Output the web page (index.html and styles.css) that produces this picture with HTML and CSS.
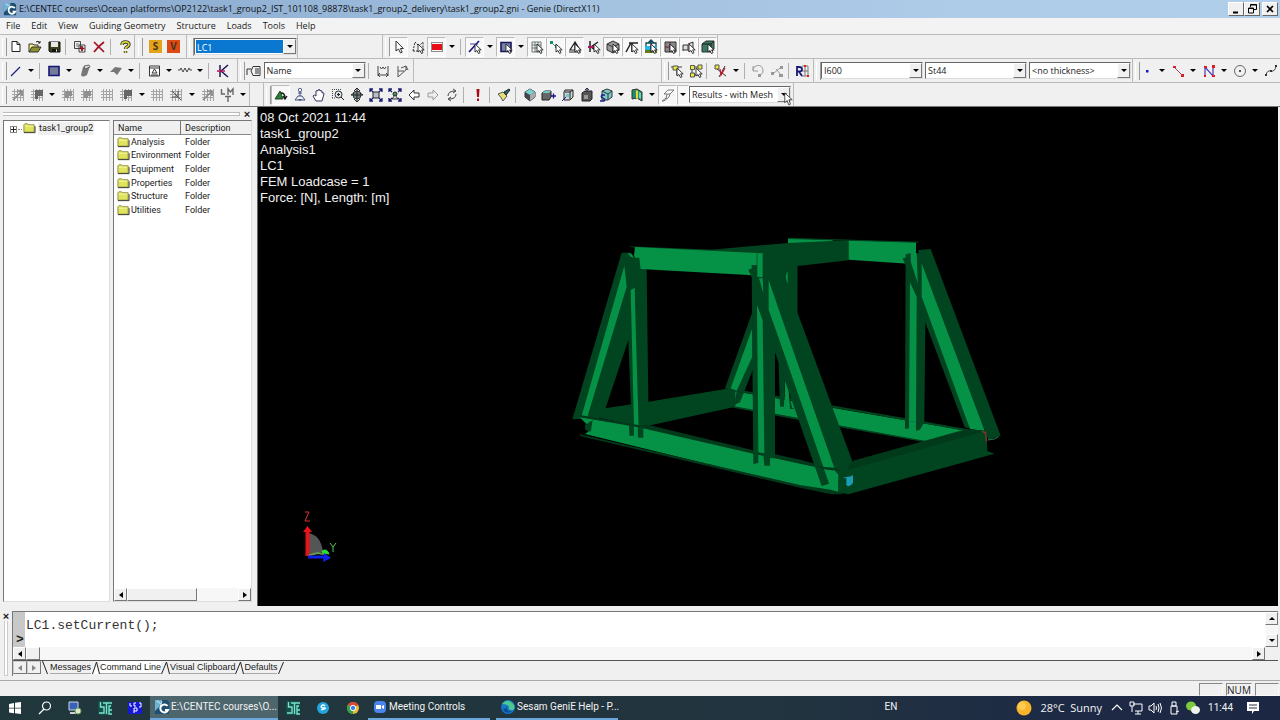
FILE: index.html
```html
<!DOCTYPE html>
<html lang="en">
<head>
<meta charset="utf-8">
<title>task1_group2.gni - Genie (DirectX11)</title>
<link rel="stylesheet" href="styles.css">
</head>
<body>
<svg class="defs" aria-hidden="true">
  <symbol id="genie" viewBox="0 0 16 16"><path d="M1 1h12l2 2v12H1z" fill="#1d4f73"/><path d="M1 1h7L5 8l-4 4z" fill="#6fb3d2"/><path d="M3 2l4 3M8 2l-2 6" stroke="#cfeaf5"/><path d="M13.500 7A4 4 0 1 0 14 11h-3" fill="none" stroke="#fff" stroke-width="2"/></symbol>
  <symbol id="ptr" viewBox="0 0 16 16"><path d="M5 2v10l2.500-2 2 4 1.700-.8L9.400 9.500h3z" fill="#fff" stroke="#333"/></symbol>
  <symbol id="sub" viewBox="0 0 16 16"><path d="M8 5v8l2-1.500 1.500 3 1.500-.8-1.400-2.800h2.600z" fill="#fff" stroke="#222" stroke-width=".9"/></symbol>
  <symbol id="new" viewBox="0 0 16 16"><path d="M4 2.500h5l3 3v7H4z" fill="#fff" stroke="#222"/><path d="M9 2.500v3h3" fill="none" stroke="#222"/></symbol>
  <symbol id="open" viewBox="0 0 16 16"><path d="M2 13V5h4l1 1h4v2" fill="#f0ee80" stroke="#333"/><path d="M2 13l3-5h9l-3 5z" fill="#8c9030" stroke="#333"/><path d="M9 3q2-2 4 1M13 2v2h-2" fill="none" stroke="#222"/></symbol>
  <symbol id="save" viewBox="0 0 16 16"><path d="M3 3h11v10H4l-1-1z" fill="#3d3f16" stroke="#111"/><path d="M5 3h7v5H5z" fill="#e8e8e8"/><path d="M6 10h6v3H6z" fill="#111"/><path d="M10 10.500h1v2h-1z" fill="#fff"/></symbol>
  <symbol id="copy" viewBox="0 0 16 16"><path d="M2.500 2.500h6v7h-6zM7 6h6v7H7z" fill="#eee" stroke="#444"/><path d="M4 5h3M4 7h3" stroke="#777"/><path d="M10 7v5M7.500 9.500h5" stroke="#901020" stroke-width="1.700"/></symbol>
  <symbol id="del" viewBox="0 0 16 16"><path d="M3 3l10 10M13 3C9 6 6 9 3 13" fill="none" stroke="#a41324" stroke-width="1.700"/></symbol>
  <symbol id="help" viewBox="0 0 16 16"><path d="M5 6c0-4 7-4 7-.5C12 8 8.500 7.500 8.500 10M8.500 12v2" fill="none" stroke="#333" stroke-width="3.400"/><path d="M5 6c0-4 7-4 7-.5C12 8 8.500 7.500 8.500 10M8.500 12v2" fill="none" stroke="#d6d832" stroke-width="1.700"/></symbol>
  <symbol id="line" viewBox="0 0 16 16"><path d="M3 13L12 4" stroke="#20208a" stroke-width="1.300"/></symbol>
  <symbol id="rect" viewBox="0 0 16 16"><path d="M3 3.500h10v9H3z" fill="#737b99" stroke="#151575" stroke-width="1.600"/></symbol>
  <symbol id="cyl" viewBox="0 0 16 16"><path d="M6 4l7-1-3 9q-5 3-6 0z" fill="#777"/><path d="M7 3l5-1 1 2-5 2z" fill="#ddd" stroke="#666"/></symbol>
  <symbol id="plate" viewBox="0 0 16 16"><path d="M2 9l5-5 7 1-5 7-3-3z" fill="#777"/></symbol>
  <symbol id="support" viewBox="0 0 16 16"><path d="M3.500 3h10v10h-10z" fill="#fff" stroke="#333"/><path d="M4 5h9M8.500 6L6 10h5zM5 12h7" fill="none" stroke="#333"/></symbol>
  <symbol id="spring" viewBox="0 0 16 16"><path d="M1 7h2l1-2 2 4 2-4 2 4 2-4 1 2h2" fill="none" stroke="#444"/></symbol>
  <symbol id="joint" viewBox="0 0 16 16"><path d="M5 2v12M13 2L6 8l7 6" fill="none" stroke="#251452" stroke-width="1.500"/><path d="M2 8h8" stroke="#c01460" stroke-width="1.500"/></symbol>
  <symbol id="label" viewBox="0 0 16 16"><path d="M7 3.500h7v9H7L5 8zM9 6h4M9 8h4M9 10h4" fill="none" stroke="#333"/><path d="M1 12V6h4" fill="none" stroke="#333"/></symbol>
  <symbol id="dim" viewBox="0 0 16 16"><path d="M3 3v10M13 3v10M3 12h10M5 10l-2 2 2 2M11 10l2 2-2 2M5 4l1.500 2L8 4l1.500 2L11 4" fill="none" stroke="#444"/></symbol>
  <symbol id="ang" viewBox="0 0 16 16"><path d="M3 3v11l9-8M3 8h6M11 3v4M6 5l5-2 2 4" fill="none" stroke="#555"/></symbol>
  <symbol id="poly" viewBox="0 0 16 16"><path d="M3 12L5 3l4 4 4-4v9M3 12h5" fill="none" stroke="#333" stroke-dasharray="2 1"/><use href="#sub"/></symbol>
  <symbol id="redsel" viewBox="0 0 16 16"><path d="M2.500 3.500h11v9h-11z" fill="none" stroke="#222" stroke-dasharray="1 1"/><path d="M3 5h10v6H3z" fill="#e80d16"/></symbol>
  <symbol id="linesel" viewBox="0 0 16 16"><path d="M2 13L12 2" stroke="#181880" stroke-width="1.700"/><path d="M3 5h8" stroke="#44a"/><use href="#sub"/></symbol>
  <symbol id="rectsel" viewBox="0 0 16 16"><path d="M3 3.500h10v9H3z" fill="#7982a3" stroke="#151560" stroke-width="1.600"/><use href="#sub"/></symbol>
  <symbol id="gridsel" viewBox="0 0 16 16"><path d="M3 3h9v10H3zM3 6h9M3 9h9M6 3v10M9 3v10" fill="none" stroke="#69756e"/><use href="#sub"/></symbol>
  <symbol id="nodesel" viewBox="0 0 16 16"><path d="M3 3l10 10" stroke="#777"/><path d="M2 2h3v3H2zM7 6h3v3H7z" fill="#12906e"/><use href="#sub"/></symbol>
  <symbol id="supsel" viewBox="0 0 16 16"><path d="M8 3L3 11h10zM2 13h12M8 3v8" fill="none" stroke="#222" stroke-width="1.200"/><use href="#sub"/></symbol>
  <symbol id="ksel" viewBox="0 0 16 16"><path d="M4 2v11M12 3L5 8l7 5" fill="none" stroke="#222" stroke-width="1.500"/><path d="M2 8h6" stroke="#b01360" stroke-width="2"/><use href="#sub"/></symbol>
  <symbol id="cubesel" viewBox="0 0 16 16"><path d="M2 5l6-3 6 3v6l-6 3-6-3z" fill="#999" stroke="#333"/><path d="M2 5l6 3 6-3M8 8v6" fill="none" stroke="#333"/><use href="#sub"/></symbol>
  <symbol id="legsel" viewBox="0 0 16 16"><path d="M2 13L7 4h6M5 4h9M8 4v9" fill="none" stroke="#222" stroke-width="1.500"/><use href="#sub"/></symbol>
  <symbol id="env" viewBox="0 0 16 16"><path d="M2 7h12v4H2z" fill="#26b6e5"/><path d="M2 11h12v3H2z" fill="#67781c"/><path d="M3 7V4h10v3M8 1v12M5 4l3-3 3 3" fill="none" stroke="#134858" stroke-width="1.300"/><use href="#sub"/></symbol>
  <symbol id="compsel" viewBox="0 0 16 16"><path d="M3 3h11v10H3z" fill="#888" stroke="#333"/><path d="M3 8h9M8 3v10" stroke="#602035"/><use href="#sub"/></symbol>
  <symbol id="equip" viewBox="0 0 16 16"><path d="M2 12V6h5v5H2M7 5l5-2v7l-5 2" fill="#ddd" stroke="#333"/><use href="#sub"/></symbol>
  <symbol id="msel" viewBox="0 0 16 16"><path d="M2 5l4-3h8v8l-3 3H2z" fill="#377b60" stroke="#333"/><path d="M2 5h9v8M11 5l3-3" fill="none" stroke="#222"/><use href="#sub"/></symbol>
  <symbol id="y1" viewBox="0 0 16 16"><path d="M2 4h11M8 4v8" stroke="#444" fill="none"/><path d="M4 3h5v4H4z" fill="#f0eb35" stroke="#555"/><use href="#sub"/></symbol>
  <symbol id="y2" viewBox="0 0 16 16"><path d="M5 4h7M4 6v6h7" stroke="#333" fill="none"/><path d="M2.500 2.500h4v4h-4zM10 2h4v4h-4zM2.500 10h4v4h-4z" fill="#f0eb35" stroke="#555"/><use href="#sub"/></symbol>
  <symbol id="y3" viewBox="0 0 16 16"><path d="M6 14l6-11M4 6l9 7" stroke="#333"/><path d="M2 2h4v4H2z" fill="#eee736" stroke="#555"/><path d="M7 6l1 6 4-7" fill="none" stroke="#c71928" stroke-width="1.300"/></symbol>
  <symbol id="undo" viewBox="0 0 16 16"><path d="M3 7a5 5 0 1 1 7 5M3 3v5h5" fill="none" stroke="#999"/><path d="M8 11h3v3H8z" fill="#999"/></symbol>
  <symbol id="xg" viewBox="0 0 16 16"><path d="M2 9h3v3H2zM11 3h3v3h-3zM10 11h4v3h-4z" fill="#999"/><path d="M5 10l6-5M7 6l6 7" stroke="#999"/></symbol>
  <symbol id="rn" viewBox="0 0 16 16"><path d="M8 3h6v10H8M8 8h6M11 3v10" fill="none" stroke="#777"/><path d="M3 13V4h2q3 0 3 2.300T5 8.500H3m2 0l3 4.500" fill="none" stroke="#181875" stroke-width="1.800"/><path d="M10 2h2v2h-2zM13 12h2v2h-2z" fill="#e11b28"/></symbol>
  <symbol id="pt" viewBox="0 0 16 16"><path d="M7 7h2.500v2.500H7z" fill="#1818c0"/></symbol>
  <symbol id="gl" viewBox="0 0 16 16"><path d="M4 4l8 8" stroke="#a44262"/><path d="M3 3h3v2H3zM11 11h3v3h-3z" fill="#d82027"/></symbol>
  <symbol id="gn" viewBox="0 0 16 16"><path d="M4 13V4l8 9V3" fill="none" stroke="#4b3ab0" stroke-width="1.200"/><path d="M3 3h3v2H3zM11 2h3v3h-3zM3 12h2v2H3zM11 12h3v2h-3z" fill="#e01c29"/></symbol>
  <symbol id="gc" viewBox="0 0 16 16"><circle cx="8" cy="8" r="5.500" fill="none" stroke="#666"/><path d="M7 7h2v2H7z" fill="#555"/></symbol>
  <symbol id="gs" viewBox="0 0 16 16"><path d="M3 12q1-5 5-4t5-5" fill="none" stroke="#444"/><path d="M2 11h2v2H2zM7 7h2v2H7zM12 2h2v2h-2z" fill="#333"/></symbol>
  <symbol id="mesh" viewBox="0 0 16 16"><path d="M2 4.500h12M2 7.500h12M2 10.500h12M4.500 2v12M7.500 2v12M10.500 2v12M13.500 2v12" stroke="#a4a4a4"/></symbol>
  <symbol id="mesh1" viewBox="0 0 16 16"><use href="#mesh"/><path d="M3 13L12 4M7 4h5v5" fill="none" stroke="#888" stroke-width="1.700"/></symbol>
  <symbol id="mesh2" viewBox="0 0 16 16"><use href="#mesh"/><path d="M5 4h7v5H9v2H5z" fill="#909090"/></symbol>
  <symbol id="meshd" viewBox="0 0 16 16"><use href="#mesh"/><path d="M6 3h8v6H9v3H6z" fill="#666"/></symbol>
  <symbol id="mesh3" viewBox="0 0 16 16"><use href="#mesh"/><path d="M4 4l9 9M4 10h6V4" fill="none" stroke="#555"/></symbol>
  <symbol id="lmt" viewBox="0 0 16 16"><path d="M2.500 2v5H6M9 8V2l2.500 3L14 2v6M6 9.500h6M9 10v5" fill="none" stroke="#666" stroke-width="1.400"/></symbol>
  <symbol id="rot" viewBox="0 0 16 16"><path d="M2 12l5-8 3 8z" fill="#2b7d34" stroke="#24472b"/><path d="M8 6q4 0 4 5M10 9l2 3 2-3" fill="none" stroke="#111" stroke-width="1.300"/></symbol>
  <symbol id="pan3" viewBox="0 0 16 16"><path d="M8 4v5M6 6h4M6 9l-3 4h10l-3-4z" fill="none" stroke="#415080"/><path d="M8 14l-2-2h4z" fill="#415080"/><circle cx="8" cy="3" r="1.700" fill="#fff" stroke="#52629a"/></symbol>
  <symbol id="hand" viewBox="0 0 16 16"><path d="M5 14L2 9q1-2 3 0V4q1-1 2 0V3q1-1 2 0v1q1-1 2 0v2q2-1 2 1l-2 7z" fill="#fff" stroke="#343466"/></symbol>
  <symbol id="zoomr" viewBox="0 0 16 16"><path d="M2 2.500h9M2.500 2v9M2 11h4" stroke="#444" fill="none" stroke-dasharray="1 1"/><circle cx="8.500" cy="7.500" r="3.500" fill="#dde5ea" stroke="#333"/><path d="M11 10l3 3M7 7.500h3M8.500 6v3" stroke="#222"/></symbol>
  <symbol id="orbit" viewBox="0 0 16 16"><circle cx="8" cy="8" r="4" fill="#71868a" stroke="#333"/><path d="M8 1v14M5 4l3-3 3 3M5 12l3 3 3-3M2 8h12M2 8l3-2M14 8l-3-2" stroke="#222" fill="none"/></symbol>
  <symbol id="fit" viewBox="0 0 16 16"><path d="M5 5h6v6H5z" fill="#bbc" stroke="#222"/><path d="M2 5V2h3M11 2h3v3M14 11v3h-3M5 14H2v-3M2 2l3 3M14 2l-3 3M2 14l3-3M14 14l-3-3" fill="none" stroke="#181b70" stroke-width="1.300"/></symbol>
  <symbol id="fits" viewBox="0 0 16 16"><circle cx="8" cy="7" r="2" fill="#44966a" stroke="#222"/><path d="M5 12l3-4 3 4z" fill="#ddd" stroke="#333"/><path d="M2 5V2h3M11 2h3v3M14 11v3h-3M5 14H2v-3M2 2l3 3M14 2l-3 3M2 14l3-3M14 14l-3-3" fill="none" stroke="#181b70" stroke-width="1.300"/></symbol>
  <symbol id="left" viewBox="0 0 16 16"><path d="M8 3L3 8l5 5v-3h5V6H8z" fill="#fff" stroke="#333"/></symbol>
  <symbol id="right" viewBox="0 0 16 16"><path d="M8 3l5 5-5 5v-3H3V6h5z" fill="#eee" stroke="#999"/></symbol>
  <symbol id="refresh" viewBox="0 0 16 16"><path d="M4 9q0-5 7-5M12 7q0 5-7 5M9 2l3 2-3 2M7 10l-3 2 3 2" fill="none" stroke="#444"/></symbol>
  <symbol id="bang" viewBox="0 0 16 16"><path d="M6.500 2h3L9 10H7zM7 11.500h2V14H7z" fill="#a50d1c"/></symbol>
  <symbol id="brush" viewBox="0 0 16 16"><path d="M2 7l5-2 4 4-4 5q-2-4-5-7z" fill="#e6df78" stroke="#555"/><path d="M8 5l5-3 1 1-4 5z" fill="#24706c" stroke="#222"/></symbol>
  <symbol id="cube" viewBox="0 0 16 16"><path d="M3 5l5-3 5 3v5l-5 4-5-4z" fill="#445" stroke="#333"/><path d="M3 5l5-3 5 3-5 3z" fill="#77d4d0"/><path d="M8 8l5-3v5l-5 4z" fill="#aaa"/></symbol>
  <symbol id="cube2" viewBox="0 0 16 16"><path d="M1 6l3-2h6v6l-2 3H1z" fill="#666" stroke="#222"/><path d="M1 6l3-2h6L8 6z" fill="#70cac8"/><path d="M10 9h5M12.500 6.500v5" stroke="#1a1a88" stroke-width="1.400"/></symbol>
  <symbol id="cube3" viewBox="0 0 16 16"><path d="M5 3h8v7l-3 3H4V5zM5 5h5v7M10 5l3-2" fill="#ccd5d7" stroke="#222"/><path d="M6 7h3v3H6z" fill="#70cac8"/><path d="M2 14l4-4" stroke="#1a1a88"/></symbol>
  <symbol id="cube4" viewBox="0 0 16 16"><path d="M3 6l3-2h7v8l-2 2H3z" fill="#555" stroke="#222"/><path d="M5 8h4v4H5z" fill="#999"/><path d="M8 1v4M6 3l2-2 2 2" stroke="#224" fill="none"/></symbol>
  <symbol id="cube5" viewBox="0 0 16 16"><path d="M4 4l5-2 5 2v6l-4 3H4z" fill="#7accc8" stroke="#333"/><path d="M4 4l6 3 4-3M10 7v6" fill="none" stroke="#333"/><path d="M7 8H4q-2 2 1 3t1 3H2" fill="none" stroke="#1a1a88" stroke-width="1.300"/></symbol>
  <symbol id="door" viewBox="0 0 16 16"><path d="M3 3l5-1 5 3v9l-5-3-5 1z" fill="#248d65" stroke="#333"/><path d="M7 3l2 1v8l-2-1z" fill="#e5db35"/><path d="M10 5l2 1v6l-2-1z" fill="#72cbcf"/></symbol>
  <symbol id="beam" viewBox="0 0 16 16"><path d="M4 7l4-4h6l-4 4zM7 7l-1 5M10 7l-1 3-5 4H2l4-3" fill="#fff" stroke="#777"/></symbol>
  <symbol id="folder" viewBox="0 0 14 12"><path d="M1 2.500l1-1h3l1 1h6v8H1z" fill="#dfe45c" stroke="#8c8c44"/><path d="M2 4h9" stroke="#f8f8b0"/><path d="M1 11h12V4" fill="none" stroke="#333"/></symbol>
  <symbol id="sg" viewBox="0 0 16 16"><path d="M1 1h14v14H1z" fill="#14504b"/><path d="M3.500 2v5H7v6H2M6 3h9M9.500 3v11M14 6h-2v8h3M12 10h3" fill="none" stroke="#7be0c8" stroke-width="1.400"/></symbol>
</svg>

<header class="titlebar">
  <svg class="ic"><use href="#genie"/></svg>
  <h1>E:\CENTEC courses\Ocean platforms\OP2122\task1_group2_IST_101108_98878\task1_group2_delivery\task1_group2.gni - Genie (DirectX11)</h1>
  <div class="winbtns">
    <button aria-label="Minimize"><svg viewBox="0 0 14 12"><path d="M4 9.500h5" stroke="#000" stroke-width="2"/></svg></button>
    <button aria-label="Restore"><svg viewBox="0 0 14 12"><path d="M5.500 4V1.500h6v5H9M3.500 5h5v5h-5zM5 2h7M3 5.500h6" fill="none" stroke="#000"/></svg></button>
    <button class="close" aria-label="Close"><svg viewBox="0 0 14 12"><path d="M4 3l6 6M10 3L4 9" stroke="#000" stroke-width="1.700"/></svg></button>
  </div>
</header>
<nav class="menubar">
  <button>File</button><button>Edit</button><button>View</button><button>Guiding Geometry</button><button>Structure</button><button>Loads</button><button>Tools</button><button>Help</button>
</nav>

<div class="row">
  <div class="bar w-std">
    <button class="tb" aria-label="New"><svg><use href="#new"/></svg></button><button class="tb" aria-label="Open"><svg><use href="#open"/></svg></button><button class="tb" aria-label="Save"><svg><use href="#save"/></svg></button><i class="sep"></i><button class="tb" aria-label="Copy"><svg><use href="#copy"/></svg></button><button class="tb" aria-label="Delete"><svg><use href="#del"/></svg></button><i class="sep"></i><button class="tb" aria-label="Help"><svg><use href="#help"/></svg></button>
  </div>
  <div class="bar w-sv">
    <button class="sq amber">S</button><button class="sq red">V</button>
  </div>
  <div class="bar w-lc">
    <div class="combo picked"><select aria-label="Load case"><option>LC1</option></select><span class="arrow"></span></div>
  </div>
  <div class="bar w-sel gap-sel">
    <button class="tb on" aria-label="Select"><svg><use href="#ptr"/></svg></button><button class="tb" aria-label="Polygon select"><svg><use href="#poly"/></svg></button><button class="tb on" aria-label="Box select"><svg><use href="#redsel"/></svg></button><button class="dd" aria-label="More"></button><i class="sep"></i><button class="tb on" aria-label="Beams"><svg><use href="#linesel"/></svg></button><button class="dd" aria-label="More"></button><button class="tb on" aria-label="Plates"><svg><use href="#rectsel"/></svg></button><button class="dd" aria-label="More"></button><button class="tb on" aria-label="Grid"><svg><use href="#gridsel"/></svg></button><button class="tb on" aria-label="Points"><svg><use href="#nodesel"/></svg></button><button class="tb on" aria-label="Supports"><svg><use href="#supsel"/></svg></button><button class="tb" aria-label="Joints"><svg><use href="#ksel"/></svg></button><button class="tb on" aria-label="Volumes"><svg><use href="#cubesel"/></svg></button><button class="tb on" aria-label="Legs"><svg><use href="#legsel"/></svg></button><button class="tb on" aria-label="Environment"><svg><use href="#env"/></svg></button><button class="tb on" aria-label="Compartments"><svg><use href="#compsel"/></svg></button><button class="tb on" aria-label="Equipment"><svg><use href="#equip"/></svg></button><button class="tb on" aria-label="Mesh"><svg><use href="#msel"/></svg></button>
  </div>
</div>

<div class="row">
  <div class="bar w-draw">
    <button class="tb" aria-label="Beam"><svg><use href="#line"/></svg></button><button class="dd" aria-label="More"></button><i class="sep"></i><button class="tb" aria-label="Plate"><svg><use href="#rect"/></svg></button><button class="dd" aria-label="More"></button><button class="tb" aria-label="Shell"><svg><use href="#cyl"/></svg></button><button class="dd" aria-label="More"></button><button class="tb" aria-label="Surface"><svg><use href="#plate"/></svg></button><button class="dd" aria-label="More"></button><i class="sep"></i><button class="tb" aria-label="Support"><svg><use href="#support"/></svg></button><button class="dd" aria-label="More"></button><button class="tb" aria-label="Spring"><svg><use href="#spring"/></svg></button><button class="dd" aria-label="More"></button><i class="sep"></i><button class="tb" aria-label="Joint"><svg><use href="#joint"/></svg></button>
  </div>
  <div class="bar w-name">
    <button class="tb" aria-label="Label"><svg><use href="#label"/></svg></button>
    <div class="combo"><select aria-label="Label by"><option>Name</option></select><span class="arrow"></span></div><i class="sep"></i><button class="tb" aria-label="Length"><svg><use href="#dim"/></svg></button><button class="tb" aria-label="Angle"><svg><use href="#ang"/></svg></button>
  </div>
  <div class="bar w-edit gap-edit">
    <button class="tb" aria-label="Move node"><svg><use href="#y1"/></svg></button><button class="tb" aria-label="Move nodes"><svg><use href="#y2"/></svg></button><i class="sep"></i><button class="tb" aria-label="Split"><svg><use href="#y3"/></svg></button><button class="dd" aria-label="More"></button><i class="sep"></i><button class="tb" aria-label="Undo"><svg><use href="#undo"/></svg></button><button class="tb" aria-label="Disconnect"><svg><use href="#xg"/></svg></button><i class="sep"></i><button class="tb" aria-label="Renumber"><svg><use href="#rn"/></svg></button>
  </div>
  <div class="bar w-prop">
    <div class="combo"><select aria-label="Section"><option>I600</option></select><span class="arrow"></span></div>
    <div class="combo"><select aria-label="Material"><option>St44</option></select><span class="arrow"></span></div>
    <div class="combo"><select aria-label="Thickness"><option>&lt;no thickness&gt;</option></select><span class="arrow"></span></div>
  </div>
  <div class="bar w-guide">
    <button class="tb" aria-label="Guide point"><svg><use href="#pt"/></svg></button><button class="dd" aria-label="More"></button><button class="tb" aria-label="Guide line"><svg><use href="#gl"/></svg></button><button class="dd" aria-label="More"></button><button class="tb" aria-label="Polyline"><svg><use href="#gn"/></svg></button><button class="dd" aria-label="More"></button><button class="tb" aria-label="Circle"><svg><use href="#gc"/></svg></button><button class="dd" aria-label="More"></button><button class="tb" aria-label="Spline"><svg><use href="#gs"/></svg></button>
  </div>
</div>

<div class="row">
  <div class="bar w-mesh">
    <button class="tb" aria-label="Mesh 1"><svg><use href="#mesh1"/></svg></button><button class="tb" aria-label="Mesh 2"><svg><use href="#meshd"/></svg></button><button class="dd" aria-label="More"></button><button class="tb" aria-label="Mesh 3"><svg><use href="#mesh2"/></svg></button><button class="tb" aria-label="Mesh 4"><svg><use href="#mesh2"/></svg></button><button class="tb" aria-label="Mesh 5"><svg><use href="#mesh"/></svg></button><button class="tb" aria-label="Mesh 6"><svg><use href="#meshd"/></svg></button><button class="dd" aria-label="More"></button><button class="tb" aria-label="Mesh 7"><svg><use href="#mesh"/></svg></button><button class="tb" aria-label="Mesh 8"><svg><use href="#mesh3"/></svg></button><button class="dd" aria-label="More"></button><button class="tb" aria-label="Mesh 9"><svg><use href="#mesh1"/></svg></button><button class="tb" aria-label="Locks"><svg><use href="#lmt"/></svg></button><button class="dd" aria-label="More"></button>
  </div>
  <div class="bar w-view gap-view">
    <button class="tb on" aria-label="Rotate"><svg><use href="#rot"/></svg></button><button class="tb" aria-label="Walk"><svg><use href="#pan3"/></svg></button><button class="tb" aria-label="Pan"><svg><use href="#hand"/></svg></button><button class="tb" aria-label="Zoom area"><svg><use href="#zoomr"/></svg></button><button class="tb" aria-label="Orbit"><svg><use href="#orbit"/></svg></button><button class="tb" aria-label="Fit all"><svg><use href="#fit"/></svg></button><button class="tb" aria-label="Fit selection"><svg><use href="#fits"/></svg></button><button class="tb" aria-label="Back"><svg><use href="#left"/></svg></button><button class="tb" aria-label="Forward"><svg><use href="#right"/></svg></button><button class="tb" aria-label="Refresh"><svg><use href="#refresh"/></svg></button><i class="sep"></i><button class="tb" aria-label="Alert"><svg><use href="#bang"/></svg></button><i class="sep"></i><button class="tb" aria-label="Paint"><svg><use href="#brush"/></svg></button><i class="sep"></i><button class="tb" aria-label="Isometric"><svg><use href="#cube"/></svg></button><button class="tb" aria-label="From X"><svg><use href="#cube2"/></svg></button><button class="tb" aria-label="From Y"><svg><use href="#cube3"/></svg></button><button class="tb" aria-label="From Z"><svg><use href="#cube4"/></svg></button><button class="tb" aria-label="Saved view"><svg><use href="#cube5"/></svg></button><button class="dd" aria-label="More"></button><button class="tb" aria-label="Clip"><svg><use href="#door"/></svg></button><button class="dd" aria-label="More"></button><button class="tb on" aria-label="Outline"><svg><use href="#beam"/></svg></button><button class="dd on" aria-label="More"></button>
    <div class="combo"><select aria-label="Display"><option>Results - with Mesh</option></select><span class="arrow"></span>
      <svg class="cursor" viewBox="0 0 12 18"><path d="M1 1v13l3-3 2.500 6 2-1L6.500 10H11z" fill="#fff" stroke="#222"/></svg></div>
  </div>
</div>

<main class="work">
  <aside class="browser">
    <div class="dockhead"><span class="hgrip"></span><button class="x" aria-label="Close browser">×</button></div>
    <div class="panes">
      <div class="tree"><span class="plus"></span><span class="dots"></span><svg class="fo"><use href="#folder"/></svg><span class="node">task1_group2</span></div>
      <div class="list">
        <table>
          <thead><tr><th class="c1">Name</th><th>Description</th></tr></thead>
          <tbody>
            <tr><td><svg class="fo"><use href="#folder"/></svg>Analysis</td><td>Folder</td></tr>
            <tr><td><svg class="fo"><use href="#folder"/></svg>Environment</td><td>Folder</td></tr>
            <tr><td><svg class="fo"><use href="#folder"/></svg>Equipment</td><td>Folder</td></tr>
            <tr><td><svg class="fo"><use href="#folder"/></svg>Properties</td><td>Folder</td></tr>
            <tr><td><svg class="fo"><use href="#folder"/></svg>Structure</td><td>Folder</td></tr>
            <tr><td><svg class="fo"><use href="#folder"/></svg>Utilities</td><td>Folder</td></tr>
          </tbody>
        </table>
        <div class="hscroll"><button class="sb l" aria-label="Scroll left"></button><span class="thumb wide"></span><span class="fill"></span><button class="sb r" aria-label="Scroll right"></button></div>
      </div>
    </div>
  </aside>
  <section class="viewport">
    <svg class="scene" viewBox="258 108 1020 497" aria-label="Frame model">
      <g transform="translate(560 225) scale(.33333)">
        <g fill="#059247">
          <path d="M684 40L822 45 800 54H684zM865 46L1068 52V118L865 104z"/>
          <path d="M520 498L1220 617 1110 652 520 545z"/>
        </g>
        <g fill="#004420">
          <path d="M445 75L684 54 865 46V106L720 122 600 132 600 84z"/>
          <path d="M684 38L1075 50V53L684 42zM205 64L608 80V86L225 68z"/>
          <path d="M135 550L265 530 510 490 526 500V545L275 600 235 604 95 574z"/>
          <path d="M684 120H712V270L690 300zM655 390L675 450 672 545 660 545zM684 490L696 548 705 552 690 552z"/>
          <path d="M577 262L495 490 530 500 522 540 540 532 580 430z"/>
          <path d="M520 492L720 524 1220 612V618L720 530 520 498zM520 543L720 580 1110 650V654L720 586 520 548z"/>
        </g>
        <path d="M577 310L512 490 530 497 577 395zM675 465L686 490 688 545 674 545z" fill="#059247"/>
        <!-- left end frame -->
        <path d="M185 83H210L222 98 232 95 260 135 266 602 235 605 215 600 205 345 135 555 92 622 75 612 82 580 37 583z" fill="#004420"/>
        <path d="M137 551L205 541V560L120 580z" fill="#004420"/>
        <path d="M193 122L200 185 82 576 65 572zM203 84L215 86 222 98 212 95zM212 195L224 188 228 340 236 605 222 603z" fill="#059247"/>
        <path d="M225 66L608 85 606 157 565 150 240 132 222 92z" fill="#059247"/>
        <path d="M222 98H238L242 135 258 140 240 150H222z" fill="#004420"/>
        <!-- front lower chord -->
        <path d="M58 576L235 604 580 682 720 715 836 740V803L720 785 75 627 95 612z" fill="#059247"/>
        <path d="M60 570L235 600 266 600 580 676 645 688 720 704 840 736V742L720 716 580 686 235 607 60 577zM60 628L720 780 836 798 850 808H815L720 788 60 633z" fill="#003a1b"/>
        <path d="M75 600L98 585 92 620 76 614zM207 600H222V632H208zM233 605H250V638H234z" fill="#004420"/>
        <!-- right end frame -->
        <path d="M1050 85H1080L1092 225H1070L1050 170z" fill="#004420"/>
        <path d="M1037 88L1050 85V170L1070 215 1087 210 1096 290 1093 590 1080 614 1068 617V590H1047V610L1035 612z" fill="#004420"/>
        <path d="M1052 84H1070L1074 190 1052 135zM1050 172L1070 215 1068 590H1047z" fill="#059247"/>
        <path d="M1028 100L1048 98 1087 215 1075 75 1112 72 1322 632 1285 645 1272 610 1215 608 1095 290 1075 215z" fill="#004420"/>
        <path d="M1085 115L1274 618 1230 612 1085 215z" fill="#059247"/>
        <!-- right lower chord -->
        <path d="M865 712L1220 615 1280 618 1282 678 1304 686 865 808 835 802V755z" fill="#004420"/>
        <path d="M870 710L1220 612 1276 618 860 736z" fill="#003a1b"/>
        <path d="M1262 618l16 2 4 30-5-2-2-22z" fill="#8b3527"/><path d="M1284 645l20-3 12-7" stroke="#42a873" stroke-width="2" fill="none"/>
        <!-- centre column and front brace -->
        <path d="M606 85L684 120 712 122V262L876 706 865 730 850 758 820 740 807 776 785 783 715 582 645 382V700H630V722H613L610 690 595 682V714L580 717 575 120H590V85z" fill="#004420"/>
        <path d="M592 85H608V157L592 155z" fill="#059247"/>
        <path d="M597 160H608L610 205zM591 238L608 285 613 685 595 682zM626 165L660 264 827 740 834 748V800L815 795 807 775 660 350 626 255zM683 138q-11 17 0 38z" fill="#059247"/>
        <path d="M565 135L575 130 612 240 608 285 590 235 577 160z" fill="#004420"/>
        <path d="M770 724l55 4 20 10-45-4z" fill="#003a1b"/>
        <path d="M848 758l25-4 6-4v24q-12 16-20 6v-20z" fill="#1b9bb5"/>
      </g>
      <g fill="none">
        <path d="M308 554V533q13 2 15 19z" fill="#555"/>
        <path d="M307.500 556V531" stroke="#e8121a" stroke-width="4"/><path d="M303 532l4.500-6 4.500 6z" fill="#e8121a"/>
        <path d="M305 512h4l-4 9h5" stroke="#d33"/>
        <path d="M309 555l9-2 6 1" stroke="#6a9a50" stroke-width="2"/><path d="M322 551q5-3 7 3l-6-1z" fill="#2fdd35" stroke="#2fdd35"/>
        <path d="M308 557h17" stroke="#0e1fe8" stroke-width="3"/><path d="M324 553l7 5-8 4z" fill="#0e1fe8"/>
        <path d="M330 543l3 4 3-4M333 547v5" stroke="#55c855"/>
      </g>
    </svg>
    <div class="info"><p>08 Oct 2021 11:44</p><p>task1_group2</p><p>Analysis1</p><p>LC1</p><p>FEM Loadcase = 1</p><p>Force: [N], Length: [m]</p></div>
  </section>
</main>

<section class="console">
  <div class="cgrip"><button class="x" aria-label="Close console">×</button><span class="vgrip"></span></div>
  <div class="cbody">
    <div class="ctext">
      <span class="gutter">&gt;</span>
      <textarea aria-label="Command line" spellcheck="false">LC1.setCurrent();</textarea>
      <div class="vscroll"><button class="sb u" aria-label="Scroll up"></button><button class="sb d" aria-label="Scroll down"></button></div>
    </div>
    <div class="hscroll"><button class="sb l" aria-label="Scroll left"></button><span class="thumb"></span><span class="fill"></span><button class="sb r" aria-label="Scroll right"></button><span class="corner"></span></div>
    <div class="tabs">
      <button class="sb l dim" aria-label="Previous tab"></button><button class="sb r dim" aria-label="Next tab"></button>
      <svg class="slash" viewBox="0 0 8 14"><path d="M1 0l5 13" stroke="#222"/></svg><button class="tab">Messages</button>
      <svg class="slash" viewBox="0 0 8 14"><path d="M1 13L5 1l3 12" stroke="#222" fill="#fff"/></svg><button class="tab cur">Command Line</button>
      <svg class="slash" viewBox="0 0 8 14"><path d="M0 13L5 1l3 12" stroke="#222" fill="none"/></svg><button class="tab">Visual Clipboard</button>
      <svg class="slash" viewBox="0 0 8 14"><path d="M0 13L5 1l3 12" stroke="#222" fill="none"/></svg><button class="tab">Defaults</button>
      <svg class="slash" viewBox="0 0 8 14"><path d="M1 13L6 1" stroke="#222"/></svg>
    </div>
  </div>
</section>

<footer class="status"><span class="cell"></span><span class="cell num">NUM</span><span class="cell"></span></footer>

<nav class="taskbar">
  <button class="ti" aria-label="Start"><svg viewBox="0 0 16 16"><path d="M2 4l5-1v4.700H2zM8 2.800L14 2v5.700H8zM2 8.500h5v4.800l-5-.8zM8 8.500h6V14l-6-.7z" fill="#fff"/></svg></button>
  <button class="ti" aria-label="Search"><svg viewBox="0 0 16 16"><circle cx="9.500" cy="6" r="4" fill="none" stroke="#fff" stroke-width="1.200"/><path d="M7 9l-5 5" stroke="#fff" stroke-width="1.200"/></svg></button>
  <button class="ti" aria-label="Remote desktop"><svg viewBox="0 0 16 16"><path d="M2 2h9v8H2z" fill="#3961b8" stroke="#ccd7e8"/><path d="M3 13h8" stroke="#ccd" stroke-width="2"/><circle cx="11" cy="11" r="3" fill="#dbe8cb" stroke="#69a34f"/></svg></button>
  <button class="ti" aria-label="Sesam"><svg><use href="#sg"/></svg></button>
  <button class="ti" aria-label="LSP"><svg viewBox="0 0 16 16"><path d="M1 2h14v12H1z" fill="#1518d8"/><path d="M3 3v3h2M9 3H7v3h2M7 13V8h3v3H7M12 3h2v4h-2" fill="none" stroke="#fff"/></svg></button>
  <button class="task active"><svg><use href="#genie"/></svg>E:\CENTEC courses\O...</button>
  <button class="ti" aria-label="Sesam Manager"><svg><use href="#sg"/></svg></button>
  <button class="ti" aria-label="Skype"><svg viewBox="0 0 16 16"><circle cx="8" cy="8" r="6" fill="#22a5de"/><path d="M10 6Q8 4 6.500 6T9 8t-3 2" fill="none" stroke="#fff" stroke-width="1.300"/></svg></button>
  <button class="ti" aria-label="Chrome"><svg viewBox="0 0 16 16"><circle cx="8" cy="8" r="6" fill="#e8bd2f"/><path d="M8 8L2.800 5A6 6 0 0 1 13.200 5z" fill="#dc4437"/><path d="M8 8L2.800 5A6 6 0 0 0 8 14z" fill="#2da14e"/><circle cx="8" cy="8" r="2.700" fill="#3f7fe8" stroke="#fff"/></svg></button>
  <button class="task"><svg viewBox="0 0 16 16"><rect x="2" y="2" width="12" height="12" rx="4" fill="#4a85ee"/><path d="M4 6h5v4H4zM10 7l2-1v4l-2-1z" fill="#fff"/></svg>Meeting Controls</button>
  <button class="task"><svg viewBox="0 0 16 16"><circle cx="8" cy="8" r="7" fill="#1478c8"/><path d="M2 5q6-7 12 1 2 5-3 5-3 0-2-3Q8 5 2 5z" fill="#4bc990"/><path d="M7 8q-1 5 5 4-5 4-9-1z" fill="#0f4b94"/></svg>Sesam GeniE Help - P...</button>
  <span class="lang">EN</span>
  <div class="tray">
    <svg viewBox="0 0 16 16"><circle cx="8" cy="8" r="7.500" fill="#f8b52c"/><circle cx="6" cy="6" r="4" fill="#fccb52"/></svg>
    <span class="weather">28°C&nbsp; Sunny</span>
    <svg viewBox="0 0 16 16"><path d="M3 10l5-5 5 5" fill="none" stroke="#fff" stroke-width="1.200"/></svg>
    <svg viewBox="0 0 16 16"><path d="M5 4h9v7H7M10 11v3M7 14h6M2 2h4v4H2zM4 6v6" fill="none" stroke="#fff"/></svg>
    <svg viewBox="0 0 16 16"><path d="M2 6h2l3-3v10l-3-3H2zM9 6q1 2 0 4M11 4q2 4 0 8M13 3q3 5 0 10" fill="none" stroke="#fff"/></svg>
    <svg viewBox="0 0 16 16"><path d="M6 2h4v4H6zM5 6h6v8H5zM10 12l3-1" fill="none" stroke="#fff"/></svg>
    <svg viewBox="0 0 16 16"><ellipse cx="6" cy="6" rx="5" ry="4.500" fill="#7bcb3c"/><ellipse cx="10.500" cy="10" rx="4.500" ry="4" fill="#eef4ec"/></svg>
    <span class="clock">11:44</span>
    <svg viewBox="0 0 16 16"><path d="M2 2h12v9H9l-2 3v-3H2z" fill="#fff"/><path d="M4 5h8M4 8h8" stroke="#234"/></svg>
  </div>
</nav>
</body>
</html>
```

FILE: styles.css
```css
* { box-sizing: border-box; }
html, body { height: 100%; }
body {
  margin: 0; display: flex; flex-direction: column; overflow: hidden;
  background: #f0f0f0; color: #1a1a1a;
  font-family: "Open Sans", "Noto Sans", sans-serif; font-size: 9px; line-height: 14px;
}
button { margin: 0; padding: 0; border: 0; background: none; font: inherit; color: inherit; }
svg { display: block; flex: none; }
.defs { position: absolute; width: 0; height: 0; }

.titlebar {
  display: flex; align-items: center; height: 18px; flex: none; padding: 0 2px 0 3px; gap: 2px;
  background: linear-gradient(90deg, #86a6cd, #a3c2e0 45%, #aecbe8 75%, #b0cfea);
}
.titlebar .ic { width: 14px; height: 14px; }
.titlebar h1 { margin: 0; flex: 1; font-size: 9px; font-weight: 400; white-space: nowrap; overflow: hidden; color: #111; }
.winbtns { display: flex; }
.winbtns button { width: 16px; height: 14px; background: #f0f0f0; border: 1px solid; border-color: #fff #666 #666 #fff; }
.winbtns svg { width: 14px; height: 12px; }
.winbtns .close { margin-left: 2px; }

.menubar { display: flex; height: 16px; flex: none; padding-left: 6px; gap: 11px; background: #f3f3f3; }

.row { display: flex; height: 24px; flex: none; border-top: 1px solid #bbb; overflow: hidden; }
.bar {
  display: flex; align-items: center; justify-content: space-between; flex: none; height: 23px;
  padding-left: 6px; border-right: 1px solid #bbb; position: relative;
}
.bar::before { content: ""; position: absolute; left: 2px; top: 3px; width: 3px; height: 18px; border-right: 1px solid #999; border-left: 1px solid #fff; }
.tb { width: 19px; height: 20px; display: grid; place-items: center; flex: none; border: 1px solid transparent; }
.tb svg { width: 16px; height: 16px; }
.on { background: #f8f8f8; border: 1px solid; border-color: #bbb #fff #fff #bbb; }
.dd { width: 12px; height: 20px; display: grid; place-items: center; flex: none; }
.dd::before, .arrow::before { content: ""; border: 3px solid transparent; border-top-color: #000; border-bottom: 0; }
.sep { width: 5px; height: 16px; border-left: 1px solid #b0b0b0; margin-left: 2px; flex: none; }
.sq { width: 13px; height: 13px; font-size: 10px; line-height: 13px; font-weight: 700; color: #432; }
.amber { background: #e2a318; }
.red { background: #dd4a12; }

.combo { position: relative; display: flex; flex: none; width: 102px; height: 17px; border: 1px solid; border-color: #666 #ddd #ddd #666; background: #fff; }
.combo select {
  appearance: none; flex: 1; min-width: 0; border: 0; margin: 0; padding: 0 0 0 2px; background: #fff;
  font: inherit; line-height: 15px; color: #222; outline: 0;
}
.combo.picked { width: 103px; }
.combo.picked select { background: #0a78d0; color: #fff; border: 1px solid #fff; padding-left: 1px; margin-right: 12px; }
.arrow { position: absolute; right: 0; top: 0; width: 13px; height: 15px; display: grid; place-items: center; background: #f0f0f0; border: 1px solid; border-color: #fff #777 #777 #fff; pointer-events: none; }
.cursor { position: absolute; right: -3px; top: 5px; width: 9px; height: 14px; z-index: 2; }
.row:has(.cursor), .row:has(.cursor) .bar { overflow: visible; z-index: 3; }

.w-std { width: 135px; padding-right: 1px; }
.w-sv { width: 51px; padding: 0 6px 0 13px; margin-left: 1px; }
.w-lc { width: 111px; padding: 0 1px 0 7px; }
.w-sel { width: 336px; }
.w-draw { width: 238px; padding-right: 7px; }
.w-name { width: 176px; padding-right: 1px; }
.w-edit { width: 153px; padding-right: 1px; padding-left: 5px; }
.w-prop { width: 319px; padding: 0 1px 0 7px; }
.w-edit .sep { margin-left: 1px; }
.w-guide { width: 147px; border: 0; padding-left: 4px; padding-right: 1px; }
.w-mesh { width: 250px; padding-left: 8px; }
.w-view { width: 531px; padding-right: 2px; padding-left: 7px; }
.gap-sel { margin-left: 84px; border-left: 1px solid #bbb; }
.gap-edit { margin-left: auto; border-left: 1px solid #bbb; }
.gap-view { margin-left: 13px; border-left: 1px solid #bbb; }

.work { flex: 1; min-height: 0; display: flex; border-top: 1px solid #777; padding-right: 2px; }
.browser { width: 258px; flex: none; display: flex; flex-direction: column; padding: 1px 5px 4px 3px; border-right: 1px solid #666; }
.dockhead { display: flex; align-items: center; height: 12px; gap: 2px; }
.hgrip { flex: 1; height: 4px; border: 1px solid #bbb; border-left: 0; background: #fff; }
.x { width: 10px; height: 12px; font: 700 11px/12px "Liberation Sans", sans-serif; }
.panes { flex: 1; display: flex; gap: 3px; min-height: 0; font-family: Roboto, sans-serif; font-size: 9px; }
.tree { width: 107px; display: flex; align-items: flex-start; padding: 1px 0 0 6px; background: #fff; border: 1px solid #777; border-right-color: #ddd; border-bottom-color: #ddd; }
.plus { width: 7px; height: 7px; margin-top: 4px; border: 1px solid #888; background: linear-gradient(#222, #222) center / 5px 1px no-repeat, linear-gradient(#222, #222) center / 1px 5px no-repeat; }
.dots { width: 4px; margin: 7px 1px 0; border-top: 1px dotted #888; }
.fo { width: 13px; height: 12px; }
.node { background: #f0f0f0; margin-left: 2px; padding: 0 1px; line-height: 13px; }
.list { flex: 1; min-width: 0; display: flex; flex-direction: column; justify-content: space-between; background: #fff; border: 1px solid #777; border-right-color: #ddd; border-bottom-color: #ddd; }
table { width: 100%; height: 96px; border-collapse: separate; border-spacing: 0; table-layout: fixed; }
th { height: 14px; padding: 0 4px; font-weight: 400; text-align: left; background: #f0f0f0; border-bottom: 1px solid #888; line-height: 12px; }
th.c1 { width: 67px; border-right: 1px solid #777; }
td { height: 13px; padding: 0 0 0 4px; line-height: 12px; white-space: nowrap; }
td .fo { float: left; margin: 0 1px 0 -1px; }

.hscroll { display: flex; height: 13px; flex: none; background: #f7f7f7; }
.sb { width: 13px; height: 13px; flex: none; display: grid; place-items: center; background: #f0f0f0; border: 1px solid; border-color: #fff #777 #777 #fff; }
.sb::before { content: ""; border: 3px solid transparent; }
.sb.l::before { border-right: 4px solid #000; border-left: 0; }
.sb.r::before { border-left: 4px solid #000; border-right: 0; }
.sb.u::before { border-bottom: 3px solid #000; border-top: 0; }
.sb.d::before { border-top: 3px solid #000; border-bottom: 0; }
.sb.dim { border-color: #ccc #777 #777 #ccc; }
.sb.dim.l::before { border-right-color: #888; }
.sb.dim.r::before { border-left-color: #888; }
.thumb { width: 14px; background: #f0f0f0; border: 1px solid; border-color: #fff #777 #777 #fff; }
.thumb.wide { width: 70px; }
.fill { flex: 1; }
.corner { width: 13px; background: #f0f0f0; }

.viewport { flex: 1; min-width: 0; position: relative; background: #000; overflow: hidden; }
.scene { width: 100%; height: 100%; }
.info { position: absolute; left: 2px; top: 3px; color: #f0f0f0; font: 13px/16px "Liberation Sans", Arial, sans-serif; }
.info p { margin: 0; }

.console { flex: none; display: flex; height: 75px; padding: 5px 2px 4px 0; border-bottom: 1px solid #aaa; }
.cgrip { width: 12px; display: flex; flex-direction: column; align-items: center; }
.cgrip .x { height: 10px; line-height: 8px; }
.vgrip { width: 4px; flex: 1; border: 1px solid #ccc; border-top: 0; background: #fff; }
.cbody { flex: 1; min-width: 0; display: flex; flex-direction: column; border-top: 1px solid #777; border-left: 1px solid #777; }
.ctext { display: flex; height: 35px; background: #fff; }
.gutter { width: 12px; background: #c8c8c8; padding: 20px 0 0 3px; font: 700 13px/16px "Liberation Mono", monospace; }
textarea { flex: 1; min-width: 0; resize: none; border: 0; padding: 6px 0 0 1px; margin: 0; outline: 0; overflow: hidden; background: #fff; color: #333; font: 13px/16px "Liberation Mono", "Courier New", monospace; }
.vscroll { width: 13px; display: flex; flex-direction: column; justify-content: space-between; background: #f7f7f7; }
.tabs { display: flex; height: 14px; border-top: 1px solid #555; font: 9px/13px "Liberation Sans", Arial, sans-serif; }
.tabs .sb { width: 14px; }
.slash { width: 9px; height: 14px; }
.tab { border-bottom: 1px solid #aaa; }
.cur { background: #fff; }

.status { flex: none; height: 15px; display: flex; justify-content: flex-end; gap: 3px; padding-top: 2px; padding-right: 1px; }
.cell { width: 24px; border: 1px solid; border-color: #888 #f8f8f8 #f8f8f8 #888; line-height: 12px; }
.num { width: 26px; text-align: center; font-size: 10px; }

.taskbar { flex: none; height: 24px; display: flex; align-items: stretch; font-family: Roboto, sans-serif; font-size: 10px; color: #f2f2f2; background: linear-gradient(90deg, #20373c, #22343f 60%, #1d2945 85%, #1c2744); }
.taskbar svg { width: 16px; height: 16px; }
.ti { width: 30px; display: grid; place-items: center; }
.task { width: 122px; margin-right: 6px; display: flex; align-items: center; gap: 1px; padding-left: 4px; border-bottom: 2px solid #6ba7dd; white-space: nowrap; }
.task.active { width: 128px; margin: 0; padding-left: 4px; background: #4d666e; }
.lang { margin-left: auto; line-height: 21px; }
.tray { margin-left: 119px; margin-right: 19px; display: flex; align-items: center; gap: 3px; }
.weather { padding: 0 4px 0 5px; font-family: "Open Sans", sans-serif; font-size: 11px; white-space: nowrap; }
.clock { padding: 0 9px 0 4px; }
```
